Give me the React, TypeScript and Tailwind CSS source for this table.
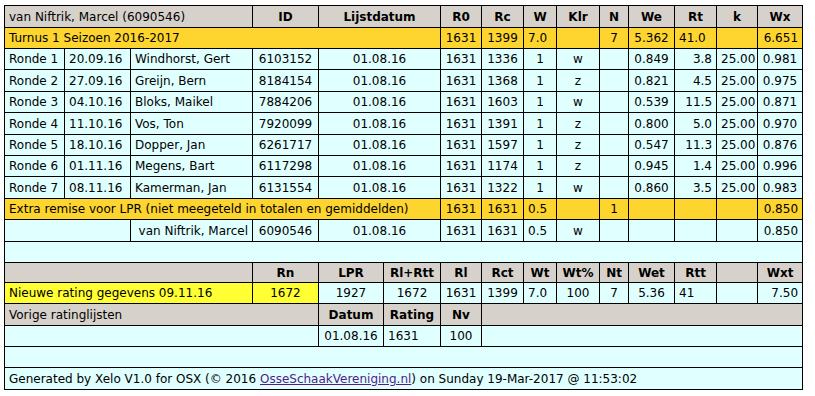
const GRAY = "bg-[#d6d2cb]";
const GOLD = "bg-[#fed42e]";
const CYAN = "bg-[#e0ffff]";
const YELLOW = "bg-[#ffff33]";

const colWidths = [60, 66, 122, 66, 65, 57, 41, 42, 33, 43, 29, 46, 42, 41, 45];

type Cell = {
	text?: React.ReactNode;
	span?: number;
	align?: "left" | "center" | "right";
	bold?: boolean;
	bg?: string;
};

const rondes = [
	["Ronde 1", "20.09.16", "Windhorst, Gert", "6103152", "1336", "w", "0.849", "3.8", "0.981"],
	["Ronde 2", "27.09.16", "Greijn, Bern", "8184154", "1368", "z", "0.821", "4.5", "0.975"],
	["Ronde 3", "04.10.16", "Bloks, Maikel", "7884206", "1603", "w", "0.539", "11.5", "0.871"],
	["Ronde 4", "11.10.16", "Vos, Ton", "7920099", "1391", "z", "0.800", "5.0", "0.970"],
	["Ronde 5", "18.10.16", "Dopper, Jan", "6261717", "1597", "z", "0.547", "11.3", "0.876"],
	["Ronde 6", "01.11.16", "Megens, Bart", "6117298", "1174", "z", "0.945", "1.4", "0.996"],
	["Ronde 7", "08.11.16", "Kamerman, Jan", "6131554", "1322", "w", "0.860", "3.5", "0.983"],
];

function Row({ cells, h, bg }: { cells: Cell[]; h: string; bg: string }) {
	return (
		<tr className={h}>
			{cells.map((c, i) => (
				<td
					key={i}
					colSpan={c.span ?? 1}
					className={[
						"border border-black px-[4px] py-0 whitespace-nowrap overflow-hidden",
						c.bg ?? bg,
						c.align === "left" ? "text-left" : c.align === "right" ? "text-right" : "text-center",
						c.bold ? "font-bold" : "",
					].join(" ")}
				>
					{c.text ?? ""}
				</td>
			))}
		</tr>
	);
}

const heights = [
	"h-[22px]", "h-[21px]", "h-[21px]", "h-[22px]", "h-[21px]", "h-[22px]", "h-[21px]", "h-[21px]", "h-[22px]",
];

export default function App() {
	const head = ["R0", "Rc", "W", "Klr", "N", "We", "Rt", "k", "Wx"];

	return (
		<div className="bg-white w-[815px] h-[396px] pt-[5px] pl-[4px] text-[12px] text-black" style={{ fontFamily: '"DejaVu Sans", Verdana, sans-serif' }}>
			<table className="table-fixed border-collapse w-[799px] leading-[14px]">
				<colgroup>
					{colWidths.map((w, i) => (
						<col key={i} style={{ width: w }} />
					))}
				</colgroup>
				<tbody>
					{/* kop */}
					<Row
						h={heights[0]}
						bg={GRAY}
						cells={[
							{ text: "van Niftrik, Marcel (6090546)", span: 3, align: "left" },
							{ text: "ID", bold: true },
							{ text: "Lijstdatum", span: 2, bold: true },
							...head.map((t) => ({ text: t, bold: true })),
						]}
					/>
					{/* turnus totaal */}
					<Row
						h={heights[1]}
						bg={GOLD}
						cells={[
							{ text: "Turnus 1 Seizoen 2016-2017", span: 6, align: "left" },
							{ text: "1631" },
							{ text: "1399" },
							{ text: "7.0", align: "left" },
							{},
							{ text: "7" },
							{ text: "5.362" },
							{ text: "41.0", align: "left" },
							{},
							{ text: "6.651", align: "right" },
						]}
					/>
					{rondes.map((r, i) => (
						<Row
							key={r[0]}
							h={heights[i + 2]}
							bg={CYAN}
							cells={[
								{ text: r[0], align: "left" },
								{ text: r[1], align: "left" },
								{ text: r[2], align: "left" },
								{ text: r[3] },
								{ text: "01.08.16", span: 2 },
								{ text: "1631" },
								{ text: r[4] },
								{ text: "1" },
								{ text: r[5] },
								{},
								{ text: r[6] },
								{ text: r[7], align: "right" },
								{ text: "25.00" },
								{ text: r[8] },
							]}
						/>
					))}
					<Row
						h="h-[21px]"
						bg={GOLD}
						cells={[
							{ text: "Extra remise voor LPR (niet meegeteld in totalen en gemiddelden)", span: 6, align: "left" },
							{ text: "1631" },
							{ text: "1631" },
							{ text: "0.5", align: "left" },
							{},
							{ text: "1" },
							{},
							{},
							{},
							{ text: "0.850", align: "right" },
						]}
					/>
					<Row
						h="h-[22px]"
						bg={CYAN}
						cells={[
							{ span: 2 },
							{ text: "van Niftrik, Marcel", align: "right" },
							{ text: "6090546" },
							{ text: "01.08.16", span: 2 },
							{ text: "1631" },
							{ text: "1631" },
							{ text: "0.5", align: "left" },
							{ text: "w" },
							{},
							{},
							{},
							{},
							{ text: "0.850", align: "right" },
						]}
					/>
					<Row h="h-[21px]" bg={CYAN} cells={[{ span: 15 }]} />

					{/* nieuwe rating */}
					<Row
						h="h-[20px]"
						bg={GRAY}
						cells={[
							{ span: 3 },
							...["Rn", "LPR", "Rl+Rtt", "Rl", "Rct", "Wt", "Wt%", "Nt", "Wet", "Rtt"].map((t) => ({ text: t, bold: true })),
							{},
							{ text: "Wxt", bold: true },
						]}
					/>
					<Row
						h="h-[21px]"
						bg={CYAN}
						cells={[
							{ text: "Nieuwe rating gegevens 09.11.16", span: 3, align: "left", bg: YELLOW },
							{ text: "1672", bg: YELLOW },
							{ text: "1927" },
							{ text: "1672" },
							{ text: "1631" },
							{ text: "1399" },
							{ text: "7.0", align: "left" },
							{ text: "100" },
							{ text: "7" },
							{ text: "5.36" },
							{ text: "41", align: "left" },
							{},
							{ text: "7.50", align: "right" },
						]}
					/>
					<Row
						h="h-[22px]"
						bg={GRAY}
						cells={[
							{ text: "Vorige ratinglijsten", span: 4, align: "left" },
							{ text: "Datum", bold: true },
							{ text: "Rating", bold: true },
							{ text: "Nv", bold: true },
							{ span: 8 },
						]}
					/>
					<Row
						h="h-[21px]"
						bg={CYAN}
						cells={[
							{ span: 4 },
							{ text: "01.08.16" },
							{ text: "1631", align: "left" },
							{ text: "100" },
							{ span: 8 },
						]}
					/>
					<Row h="h-[21px]" bg={CYAN} cells={[{ span: 15 }]} />
					<Row
						h="h-[22px]"
						bg={CYAN}
						cells={[
							{
								span: 15,
								align: "left",
								text: (
									<>
										Generated by Xelo V1.0 for OSX (© 2016{" "}
										<a href="#" className="text-[#551a8b] underline">
											OsseSchaakVereniging.nl
										</a>
										) on Sunday 19-Mar-2017 @ 11:53:02
									</>
								),
							},
						]}
					/>
				</tbody>
			</table>
		</div>
	);
}
